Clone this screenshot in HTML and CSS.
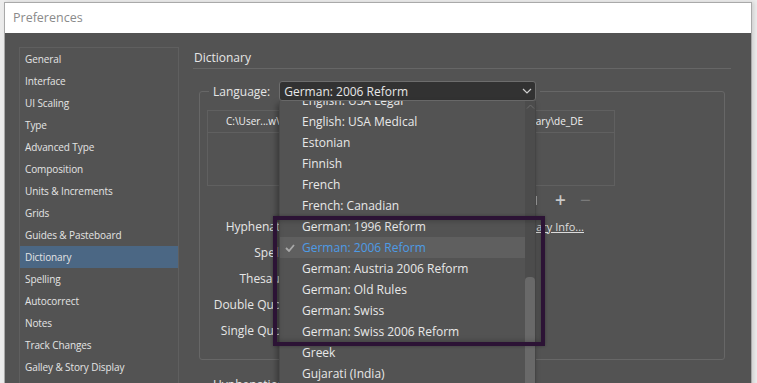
FILE: index.html
```html
<!DOCTYPE html>
<html lang="en">
<head>
<meta charset="utf-8">
<title>Preferences</title>
<link rel="stylesheet" href="styles.css">
</head>
<body>
<div class="window">
  <div class="titlebar">Preferences</div>
  <div class="content">
    <ul class="nav">
      <li class="nav-item">General</li>
      <li class="nav-item">Interface</li>
      <li class="nav-item">UI Scaling</li>
      <li class="nav-item">Type</li>
      <li class="nav-item">Advanced Type</li>
      <li class="nav-item">Composition</li>
      <li class="nav-item">Units &amp; Increments</li>
      <li class="nav-item">Grids</li>
      <li class="nav-item">Guides &amp; Pasteboard</li>
      <li class="nav-item is-active">Dictionary</li>
      <li class="nav-item">Spelling</li>
      <li class="nav-item">Autocorrect</li>
      <li class="nav-item">Notes</li>
      <li class="nav-item">Track Changes</li>
      <li class="nav-item">Galley &amp; Story Display</li>
      <li class="nav-item">Display Performance</li>
    </ul>
    <main class="panel">
      <h1 class="heading">Dictionary</h1>
      <fieldset class="group">
        <legend class="legend">
          <span class="legend-label">Language:</span>
          <span class="select">
            <span class="select-value">German: 2006 Reform</span>
            <svg class="chev" width="10" height="6" viewBox="0 0 10 6"><polyline points="1,1 5,5 9,1" fill="none" stroke="#cfcfcf" stroke-width="1.2"/></svg>
          </span>
        </legend>
        <div class="dict-table">
          <div class="dict-head">
            <span>C:\User...w\</span>
            <span>...\User Dictionary\de_DE</span>
          </div>
          <div class="dict-body"></div>
        </div>
        <div class="dict-tools">
          <span class="tool tool-folder"></span>
          <span class="tool tool-plus">+</span>
          <span class="tool tool-minus">−</span>
        </div>
        <div class="form">
          <div class="form-row"><span class="form-label">Hyphenation:</span><span class="form-link">User Dictionary Info...</span></div>
          <div class="form-row"><span class="form-label">Spelling:</span></div>
          <div class="form-row"><span class="form-label">Thesaurus:</span></div>
          <div class="form-row"><span class="form-label">Double Quotes:</span></div>
          <div class="form-row"><span class="form-label">Single Quotes:</span></div>
        </div>
      </fieldset>
      <h2 class="subheading">Hyphenation Exceptions</h2>
    </main>
  </div>

  <div class="menu">
    <ul class="menu-list">
      <li class="menu-item">English: USA Legal</li>
      <li class="menu-item">English: USA Medical</li>
      <li class="menu-item">Estonian</li>
      <li class="menu-item">Finnish</li>
      <li class="menu-item">French</li>
      <li class="menu-item">French: Canadian</li>
      <li class="menu-item">German: 1996 Reform</li>
      <li class="menu-item is-selected"><svg class="check" width="10" height="8" viewBox="0 0 10 8"><polyline points="1,4 4,7 9,1" fill="none" stroke="#a9a9a9" stroke-width="1.8"/></svg>German: 2006 Reform</li>
      <li class="menu-item">German: Austria 2006 Reform</li>
      <li class="menu-item">German: Old Rules</li>
      <li class="menu-item">German: Swiss</li>
      <li class="menu-item">German: Swiss 2006 Reform</li>
      <li class="menu-item">Greek</li>
      <li class="menu-item">Gujarati (India)</li>
      <li class="menu-item">Hebrew</li>
    </ul>
    <div class="menu-scroll">
      <svg class="scroll-up" width="9" height="5" viewBox="0 0 9 5"><polyline points="1,4.5 4.5,1 8,4.5" fill="none" stroke="#6c6c6c" stroke-width="1"/></svg>
      <div class="scroll-thumb"></div>
    </div>
  </div>
  <div class="annotation"></div>
</div>
</body>
</html>
```
FILE: styles.css
```css
* { box-sizing: border-box; }
html, body { margin: 0; padding: 0; }
body {
  width: 757px;
  height: 383px;
  overflow: hidden;
  background: #ececec;
  font-family: "Open Sans", "Noto Sans", sans-serif;
}
.window {
  position: relative;
  margin: 2px 0 0 4px;
  width: 748px;
  height: 420px;
  border: 1px solid #a9a9a9;
  background: #535353;
  box-shadow: 2px 0 4px rgba(0,0,0,0.12);
}
.titlebar {
  height: 30px;
  background: #ffffff;
  color: #8a8a8a;
  font-size: 12.5px;
  line-height: 30px;
  padding-left: 8px;
}
.content {
  display: flex;
  padding: 14px 20px 0 14px;
  gap: 14px;
}
.nav {
  list-style: none;
  margin: 0;
  padding: 0;
  width: 160px;
  height: 360px;
  border: 1px solid #5f5f5f;
  flex: none;
}
.nav-item {
  height: 22px;
  line-height: 22px;
  padding-left: 5px;
  font-size: 10px;
  letter-spacing: -0.1px;
  color: #e4e4e4;
  white-space: nowrap;
}
.nav-item.is-active { background: #4b6784; }
.panel { flex: 1; min-width: 0; }
.heading {
  margin: 1px 0 0;
  height: 21px;
  line-height: 20px;
  font-size: 12px;
  font-weight: normal;
  color: #e6e6e6;
  padding-left: 1px;
  border-bottom: 1px solid #666666;
}
.group {
  margin: 12px 6px 0;
  padding: 9px 7px 16px;
  border: 1px solid #676767;
  border-radius: 3px;
  min-inline-size: 0;
}
.legend {
  display: flex;
  align-items: center;
  gap: 9px;
  margin-left: 2px;
  padding: 0 4px;
}
.legend-label { font-size: 12px; color: #e6e6e6; }
.select {
  display: flex;
  align-items: center;
  justify-content: space-between;
  width: 257px;
  height: 20px;
  padding: 0 3px 0 4px;
  background: #323232;
  border: 1px solid #6d6d6d;
  border-radius: 3px;
  font-size: 12px;
  color: #e8e8e8;
}
.dict-table {
  width: 408px;
  height: 76px;
  border: 1px solid #606060;
}
.dict-head {
  display: flex;
  justify-content: space-between;
  height: 22px;
  line-height: 21px;
  padding: 0 31px 0 18px;
  border-bottom: 1px solid #606060;
  font-size: 10px;
  color: #f0f0f0;
}
.dict-tools {
  display: flex;
  justify-content: flex-end;
  align-items: center;
  gap: 10px;
  width: 408px;
  height: 20px;
  margin-top: 4px;
  padding-right: 22px;
}
.tool { width: 15px; text-align: center; font-size: 19px; line-height: 20px; color: #c8c8c8; }
.tool-plus { font-weight: 600; }
.tool-minus { color: #7a7a7a; }
.tool-folder {
  width: 12px;
  height: 9px;
  margin-right: 6px;
  border-right: 3px solid #9a9a9a;
}
.form { margin-top: 3px; width: 377px; }
.form-row {
  display: flex;
  align-items: center;
  height: 26px;
}
.form-label {
  width: 94px;
  flex: none;
  text-align: right;
  white-space: nowrap;
  font-size: 12px;
  color: #e6e6e6;
}
.form-link {
  margin-left: auto;
  font-size: 11px;
  color: #dcdcdc;
  text-decoration: underline;
  white-space: nowrap;
}
.subheading {
  margin: 16px 0 0 20px;
  font-size: 12px;
  font-weight: normal;
  color: #e6e6e6;
}
.menu {
  position: absolute;
  left: 274px;
  top: 98px;
  width: 257px;
  height: 300px;
  overflow: hidden;
  background: #535353;
  border-left: 1px solid #4a4a4a;
  border-right: 1px solid #454545;
  box-shadow: -2px 3px 6px rgba(0,0,0,0.35);
}
.menu-list {
  list-style: none;
  margin: -11px 0 0;
  padding: 0 10px 0 0;
}
.menu-item {
  position: relative;
  height: 21px;
  line-height: 21px;
  padding-left: 22px;
  font-size: 12px;
  color: #e8e8e8;
  white-space: nowrap;
}
.menu-item.is-selected { background: #5f5f5f; color: #4d9be6; }
.check { position: absolute; left: 5px; top: 7px; }
.menu-scroll {
  position: absolute;
  top: 0;
  right: 0;
  bottom: 0;
  width: 10px;
  background: #4c4c4c;
}
.scroll-up { position: absolute; left: 1px; top: 3px; }
.scroll-thumb {
  position: absolute;
  left: 0;
  top: 176px;
  width: 10px;
  height: 200px;
  background: #696969;
  border-radius: 4px 4px 0 0;
}
.annotation {
  position: absolute;
  left: 268px;
  top: 213px;
  width: 272px;
  height: 130px;
  border: 4px solid #2c1335;
  box-shadow: inset 0 0 6px rgba(0,0,0,0.3), 0 0 3px rgba(0,0,0,0.3);
}
```
